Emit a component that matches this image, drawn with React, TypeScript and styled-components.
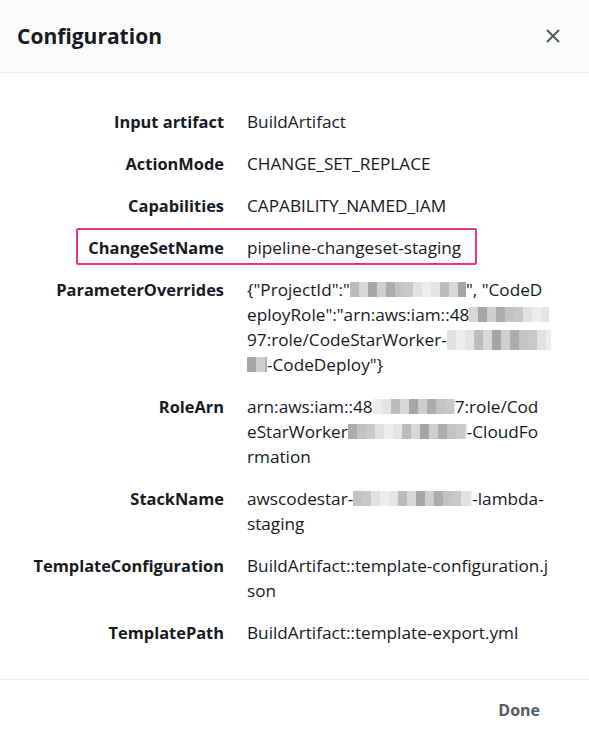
import { FunctionComponent } from "react";
import styled, { createGlobalStyle } from "styled-components";

type Segment = string | { r: number; h?: number; seed?: number };

type ConfigRow = {
  label: string;
  lines: Segment[][];
  mark?: { left: number; width: number };
};

const GlobalStyle = createGlobalStyle`
  html, body {
    margin: 0;
    padding: 0;
    background: #ffffff;
  }
  body {
    font-family: "Open Sans", "Noto Sans", Arial, sans-serif;
    color: #16191f;
  }
`;

const greys = ["#c9c9c9", "#b4b4b4", "#dedede", "#a3a3a3", "#d3d3d3", "#ececec", "#bcbcbc", "#9c9c9c", "#e2e2e2", "#c2c2c2"];

// pixelated stripes standing in for the blurred (redacted) parts of the screenshot
const pixelate = (width: number, seed: number) => {
  const step = 9;
  const stops: string[] = [];
  for (let x = 0, i = seed; x < width; x += step, i += 3) {
    const c = greys[i % greys.length];
    stops.push(`${c} ${x}px ${Math.min(x + step, width)}px`);
  }
  return `linear-gradient(90deg, ${stops.join(", ")})`;
};

const Dialog = styled.div`
  width: 100%;
  min-height: 732px;
  display: flex;
  flex-direction: column;
  background: #ffffff;
`;

const Header = styled.header`
  height: 73px;
  box-sizing: border-box;
  display: flex;
  align-items: center;
  justify-content: space-between;
  padding: 0 20px 0 17px;
  background: #fafafa;
  border-bottom: 1px solid #eaeded;
`;

const Title = styled.h2`
  margin: 0;
  font-size: 21px;
  line-height: 28px;
  font-weight: 700;
  color: #16191f;
`;

const CloseButton = styled.button`
  width: 32px;
  height: 32px;
  padding: 0;
  border: none;
  background: transparent;
  display: flex;
  align-items: center;
  justify-content: center;
  color: #545b64;
  cursor: pointer;
`;

const Body = styled.div`
  padding: 36px 16px 34px;
  display: flex;
  flex-direction: column;
  gap: 17px;
`;

const Row = styled.div`
  position: relative;
  display: flex;
  align-items: flex-start;
  line-height: 25px;
`;

const Label = styled.div`
  flex: 0 0 208px;
  text-align: right;
  font-size: 16.4px;
  font-weight: 700;
  color: #16191f;
`;

const Value = styled.div`
  margin-left: 23px;
  display: flex;
  flex-direction: column;
  font-size: 17.2px;
  color: #16191f;
`;

const Line = styled.div`
  white-space: nowrap;
`;

const Redacted = styled.span<{ $w: number; $h: number; $bg: string }>`
  display: inline-block;
  width: ${(p) => p.$w}px;
  height: ${(p) => p.$h}px;
  vertical-align: middle;
  margin-top: -3px;
  background: ${(p) => p.$bg};
  opacity: 0.9;
`;

const Mark = styled.span<{ $left: number; $width: number }>`
  position: absolute;
  top: -7px;
  left: ${(p) => p.$left}px;
  width: ${(p) => p.$width}px;
  height: 37px;
  box-sizing: border-box;
  border: 2px solid #e8386c;
  border-radius: 2px;
  pointer-events: none;
`;

const Footer = styled.footer`
  border-top: 1px solid #eaeded;
  display: flex;
  justify-content: flex-end;
  padding: 14px 29px 14px;
`;

const DoneButton = styled.button`
  border: none;
  background: transparent;
  padding: 4px 20px;
  font-family: inherit;
  font-size: 16px;
  line-height: 24px;
  font-weight: 700;
  color: #545b64;
  cursor: pointer;
`;

const rows: ConfigRow[] = [
  { label: "Input artifact", lines: [["BuildArtifact"]] },
  { label: "ActionMode", lines: [["CHANGE_SET_REPLACE"]] },
  { label: "Capabilities", lines: [["CAPABILITY_NAMED_IAM"]] },
  {
    label: "ChangeSetName",
    lines: [["pipeline-changeset-staging"]],
    mark: { left: 60, width: 401 },
  },
  {
    label: "ParameterOverrides",
    lines: [
      ['{"ProjectId":"', { r: 116, seed: 1 }, '", "CodeD'],
      ['eployRole":"arn:aws:iam::48', { r: 80, seed: 4 }],
      ["97:role/CodeStarWorker-", { r: 104, h: 20, seed: 2 }],
      [{ r: 20, seed: 7 }, '-CodeDeploy"}'],
    ],
  },
  {
    label: "RoleArn",
    lines: [
      ["arn:aws:iam::48", { r: 82, seed: 5 }, "7:role/Cod"],
      ["eStarWorker", { r: 119, seed: 3 }, "-CloudFo"],
      ["rmation"],
    ],
  },
  {
    label: "StackName",
    lines: [["awscodestar-", { r: 119, seed: 6 }, "-lambda-"], ["staging"]],
  },
  {
    label: "TemplateConfiguration",
    lines: [["BuildArtifact::template-configuration.j"], ["son"]],
  },
  { label: "TemplatePath", lines: [["BuildArtifact::template-export.yml"]] },
];

const CloseIcon: FunctionComponent = () => (
  <svg width="16" height="16" viewBox="0 0 16 16" fill="none">
    <path d="M2 2l12 12M14 2L2 14" stroke="currentColor" strokeWidth="2" />
  </svg>
);

const App: FunctionComponent = () => {
  return (
    <>
      <GlobalStyle />
      <Dialog>
        <Header>
          <Title>Configuration</Title>
          <CloseButton aria-label="Close">
            <CloseIcon />
          </CloseButton>
        </Header>
        <Body>
          {rows.map((row) => (
            <Row key={row.label}>
              <Label>{row.label}</Label>
              <Value>
                {row.lines.map((line, i) => (
                  <Line key={i}>
                    {line.map((seg, j) =>
                      typeof seg === "string" ? (
                        <span key={j}>{seg}</span>
                      ) : (
                        <Redacted
                          key={j}
                          $w={seg.r}
                          $h={seg.h ?? 15}
                          $bg={pixelate(seg.r, seg.seed ?? 0)}
                        />
                      )
                    )}
                  </Line>
                ))}
              </Value>
              {row.mark && <Mark $left={row.mark.left} $width={row.mark.width} />}
            </Row>
          ))}
        </Body>
        <Footer>
          <DoneButton>Done</DoneButton>
        </Footer>
      </Dialog>
    </>
  );
};

export default App;
